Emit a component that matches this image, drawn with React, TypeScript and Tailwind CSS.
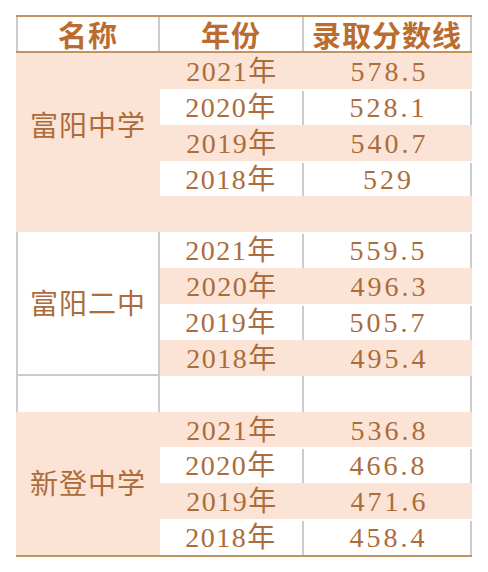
import { clsx } from 'clsx';

interface Group {
  name: string;
  shadeFirst: boolean;
  rows: [string, string][];
}

const groups: Group[] = [
  {
    name: '富阳中学',
    shadeFirst: true,
    rows: [
      ['2021年', '578.5'],
      ['2020年', '528.1'],
      ['2019年', '540.7'],
      ['2018年', '529'],
    ],
  },
  {
    name: '富阳二中',
    shadeFirst: false,
    rows: [
      ['2021年', '559.5'],
      ['2020年', '496.3'],
      ['2019年', '505.7'],
      ['2018年', '495.4'],
    ],
  },
  {
    name: '新登中学',
    shadeFirst: true,
    rows: [
      ['2021年', '536.8'],
      ['2020年', '466.8'],
      ['2019年', '471.6'],
      ['2018年', '458.4'],
    ],
  },
];

const bodyFont = "font-['Liberation_Serif','Noto_Sans_CJK_SC',serif]";
const grayLine = 'border-[#cbcbcb]';

function DataRow({ year, score, shaded }: { year: string; score: string; shaded: boolean }) {
  return (
    <div className={clsx('flex h-[35.86px] pt-0.5', shaded ? 'bg-[#fbe4d5]' : 'bg-white')}>
      <div
        className={clsx(
          'w-[144px] flex items-center justify-center',
          !shaded && `border-r-2 ${grayLine}`,
        )}
      >
        <span className="tracking-[1.5px]">{year}</span>
      </div>
      <div
        className={clsx(
          'w-[168px] flex items-center justify-center',
          !shaded && `border-r-2 ${grayLine}`,
        )}
      >
        <span className="tracking-[3px] pl-[3px]">{score}</span>
      </div>
    </div>
  );
}

export default function App() {
  return (
    <div className="min-h-[572px] bg-white pt-[15px] pl-4">
      <div className={clsx('w-[456px] text-[28px] leading-none text-[#ac6c3c]', bodyFont)}>
        {/* Header */}
        <div className="flex h-[38px] border-y-2 border-[#c2925f] bg-white font-['Noto_Sans_CJK_SC',sans-serif] font-bold text-[29px] text-[#bb6d30]">
          <div className={`w-[144px] flex items-center justify-center border-x-2 ${grayLine}`}>
            <span className="tracking-[1px]">名称</span>
          </div>
          <div className={`w-[144px] flex items-center justify-center border-r-2 ${grayLine}`}>
            <span className="tracking-[1px]">年份</span>
          </div>
          <div className={`w-[168px] flex items-center justify-center border-r-2 ${grayLine}`}>
            <span className="tracking-[1px]">录取分数线</span>
          </div>
        </div>

        {/* Body */}
        <div className="border-b-2 border-[#c2925f]">
          {groups.map((group, gi) => (
            <div key={group.name}>
              <div className="flex">
                <div
                  className={clsx(
                    'w-[144px] flex items-center justify-center pt-1',
                    group.shadeFirst
                      ? 'bg-[#fbe4d5]'
                      : `bg-white border-x-2 border-b-2 ${grayLine}`,
                  )}
                >
                  <span className="tracking-[1px]">{group.name}</span>
                </div>
                <div>
                  {group.rows.map(([year, score], i) => (
                    <DataRow
                      key={year}
                      year={year}
                      score={score}
                      shaded={group.shadeFirst === (i % 2 === 0)}
                    />
                  ))}
                </div>
              </div>

              {/* spacer row between groups */}
              {gi === 0 && <div className="h-[35.86px] bg-[#fbe4d5]" />}
              {gi === 1 && (
                <div className="flex h-[35.86px] bg-white">
                  <div className={`w-[144px] border-x-2 ${grayLine}`} />
                  <div className={`w-[144px] border-r-2 ${grayLine}`} />
                  <div className={`w-[168px] border-r-2 ${grayLine}`} />
                </div>
              )}
            </div>
          ))}
        </div>
      </div>
    </div>
  );
}
